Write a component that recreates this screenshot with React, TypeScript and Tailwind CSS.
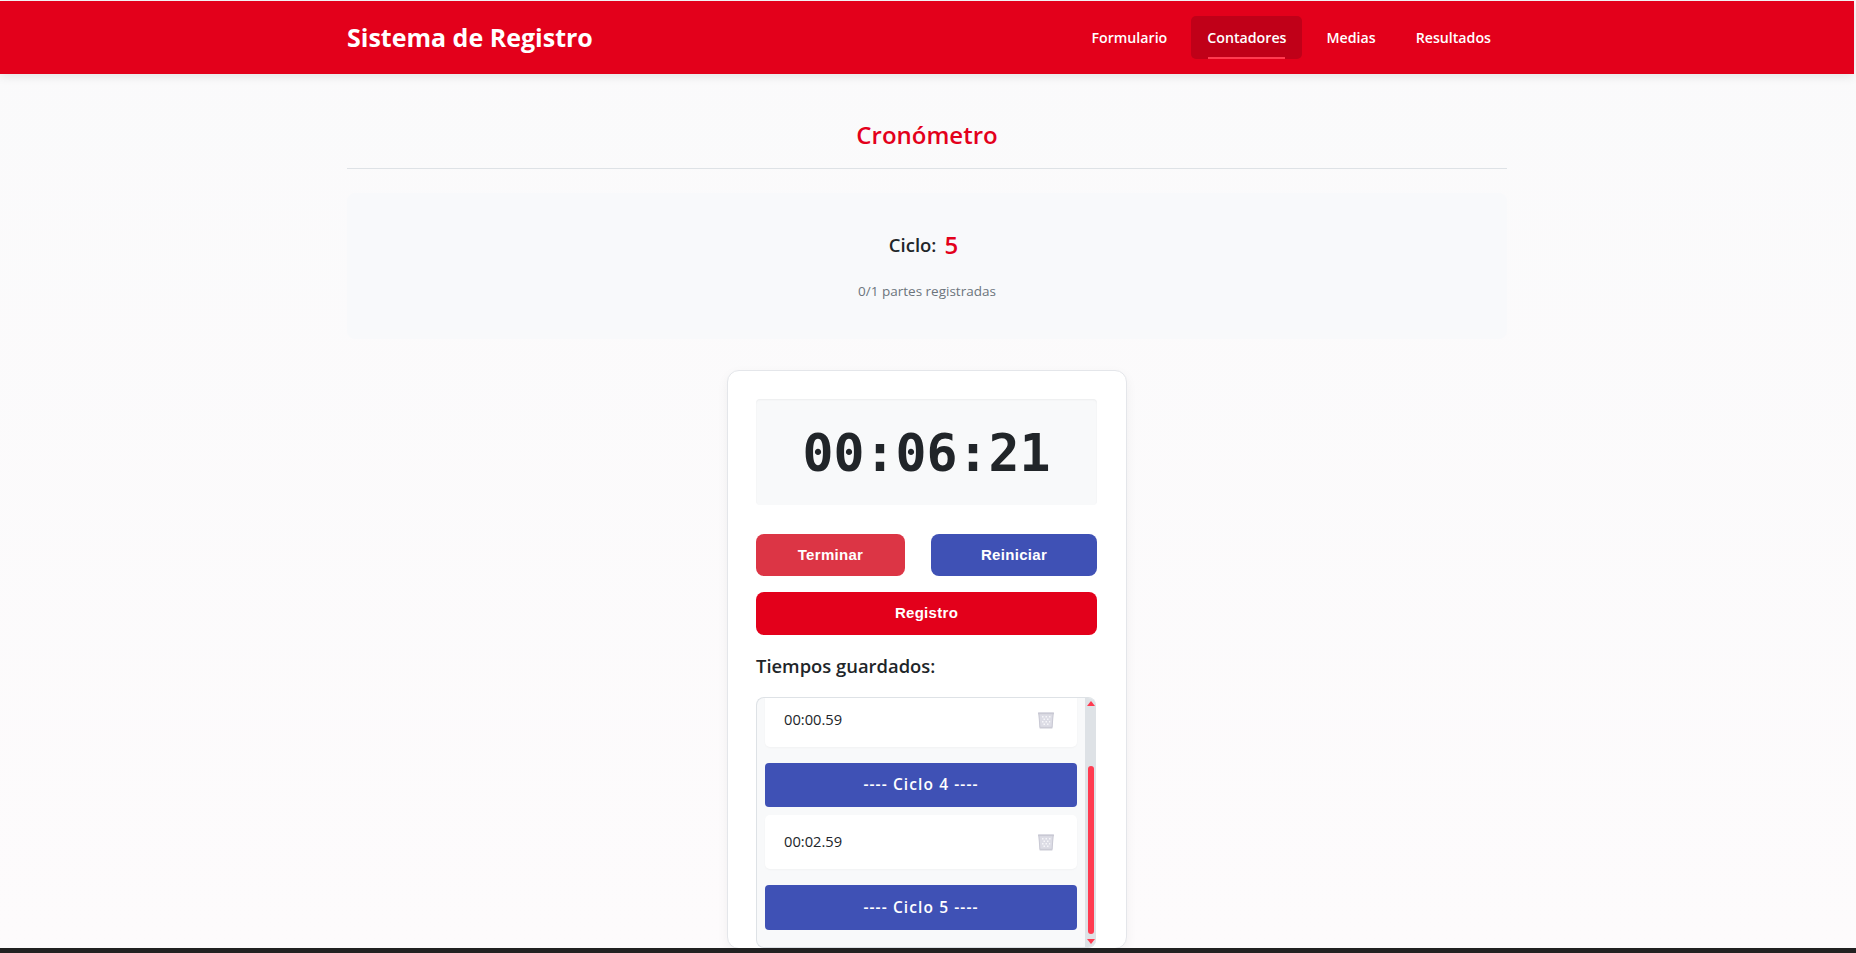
const navItems = [
  { title: "Formulario", active: false },
  { title: "Contadores", active: true },
  { title: "Medias", active: false },
  { title: "Resultados", active: false },
]

function TrashIcon() {
  return (
    <svg width="18" height="18" viewBox="0 0 18 18" className="shrink-0">
      <path d="M1.5 1.5h15l-1.2 15.5H2.7z" fill="#dcdce5" />
      <path d="M5 5h1.5v1.5H5zM8.5 5H10v1.5H8.5zM12 5h1.5v1.5H12zM6.5 7.5H8V9H6.5zM10 7.5h1.5V9H10zM5 10h1.5v1.5H5zM8.5 10H10v1.5H8.5zM12 10h1.2v1.5H12zM6.5 12.5H8V14H6.5zM10 12.5h1.5V14H10z" fill="#f6f6f9" />
      <path d="M1 1.5h16v1.7H1z" fill="#c9c9d4" />
      <path d="M2.5 15.8h13l-.2 1.7H2.7z" fill="#cbcbd5" />
      <path d="M1.9 3l1 13M16.1 3l-1 13" stroke="#c9c9d4" strokeWidth="1" />
    </svg>
  )
}

function TimeRow({ time, className }: { time: string; className?: string }) {
  return (
    <div className={`flex h-[54px] items-center justify-between rounded-[5px] bg-white pl-[19px] pr-[22px] shadow-[0_1px_2px_rgba(0,0,0,0.03)] ${className ?? ""}`}>
      <span className="-mt-px text-[14.7px] text-[#212529]">{time}</span>
      <TrashIcon />
    </div>
  )
}

function CycleBar({ label, className }: { label: string; className?: string }) {
  return (
    <div className={`flex items-center justify-center rounded-[4px] bg-[#3f51b5] text-[15.5px] font-semibold tracking-[1.1px] text-white ${className ?? ""}`}>
      {label}
    </div>
  )
}

export default function App() {
  return (
    <div className="flex h-screen flex-col overflow-hidden bg-white font-['Open_Sans','Noto_Sans',sans-serif]">
      <div className="flex min-h-0 flex-1 flex-col overflow-hidden bg-gradient-to-b from-[#fafafb] to-[#fdfbfc] pr-[2px] pt-px">
        <header className="h-[73px] shrink-0 bg-[#e3001b] shadow-[0_2px_10px_rgba(0,0,0,0.1)]">
          <div className="mx-auto flex h-full w-[1160px] items-center justify-between">
            <div className="pt-px text-[25px] font-bold text-white">Sistema de Registro</div>
            <nav className="flex items-center gap-[8px]">
              {navItems.map((item) => (
                <a
                  key={item.title}
                  className={`relative flex h-[43px] items-center rounded-[5px] px-[16px] text-[14.2px] font-semibold text-white ${item.active ? "bg-[#c00018]" : ""}`}
                >
                  {item.title}
                  {item.active && <span className="absolute bottom-0 left-[17px] right-[17px] h-[2px] bg-[#ff3b50]" />}
                </a>
              ))}
            </nav>
          </div>
        </header>

        <main className="mx-auto flex w-[1160px] flex-col items-center">
          <div className="flex h-[95px] w-full items-center justify-center border-b border-[#dee2e6] pt-[28px]">
            <h1 className="text-[24px] font-semibold leading-none text-[#e3001b]">Cronómetro</h1>
          </div>

          <section className="mt-[24px] flex h-[146px] w-full flex-col items-center rounded-[8px] bg-[#f8f9fb] pt-[36px]">
            <div className="flex items-center gap-[8px] pr-[7px]">
              <span className="text-[18.5px] font-semibold text-[#212529]">Ciclo:</span>
              <span className="text-[24px] font-semibold leading-[32px] text-[#e3001b]">5</span>
            </div>
            <p className="mt-[20px] text-[13.5px] text-[#6c757d]">0/1 partes registradas</p>
          </section>

          <section className="mt-[31px] w-[400px] shrink-0 rounded-[12px] border border-[#e4e6ea] bg-white pl-[28px] pr-[29px] pt-[28px] shadow-[0_4px_12px_rgba(0,0,0,0.05)]">
            <div className="flex h-[106px] items-center justify-center rounded-[4px] bg-[#f8f9fa] pt-[3px] font-['DejaVu_Sans_Mono',monospace] text-[51.5px] font-bold text-[#212529] shadow-[inset_0_1px_2px_rgba(0,0,0,0.05)]">
              00:06:21
            </div>

            <div className="mt-[29px] flex justify-between">
              <button className="h-[42px] w-[149px] rounded-[8px] bg-[#dc3545] font-['Liberation_Sans',sans-serif] text-[15px] font-bold tracking-[0.3px] text-white">Terminar</button>
              <button className="h-[42px] w-[166px] rounded-[8px] bg-[#3f51b5] font-['Liberation_Sans',sans-serif] text-[15px] font-bold tracking-[0.3px] text-white">Reiniciar</button>
            </div>
            <button className="mt-[16px] h-[43px] w-full rounded-[8px] bg-[#e3001b] font-['Liberation_Sans',sans-serif] text-[15px] font-bold tracking-[0.3px] text-white">Registro</button>

            <h2 className="mt-[19px] text-[18.4px] font-semibold leading-[24px] text-[#212529]">Tiempos guardados:</h2>

            <div className="mr-px mt-[19px] flex h-[251px] overflow-hidden rounded-[8px] border border-r-0 border-[#dee2e6] bg-[#f8f9fa]">
              <div className="min-w-0 flex-1 overflow-hidden px-[8px]">
                <div className="-mt-[5px]">
                  <TimeRow time="00:00.59" />
                  <CycleBar label="---- Ciclo 4 ----" className="mt-[16px] h-[44px]" />
                  <TimeRow time="00:02.59" className="mt-[8px]" />
                  <CycleBar label="---- Ciclo 5 ----" className="mt-[16px] h-[45px]" />
                </div>
              </div>
              <div className="flex w-[11px] shrink-0 flex-col items-center bg-[#dee2e6] py-[3px]">
                <span className="h-0 w-0 border-x-[4px] border-b-[5px] border-x-transparent border-b-[#ff3b50]" />
                <span className="mt-[60px] w-[6px] flex-1 rounded-full bg-[#ff3b50]" />
                <span className="mt-[5px] h-0 w-0 border-x-[4px] border-t-[5px] border-x-transparent border-t-[#ff3b50]" />
              </div>
            </div>
          </section>
        </main>
      </div>
      <div className="h-[5px] shrink-0 bg-[#212121]" />
    </div>
  )
}
